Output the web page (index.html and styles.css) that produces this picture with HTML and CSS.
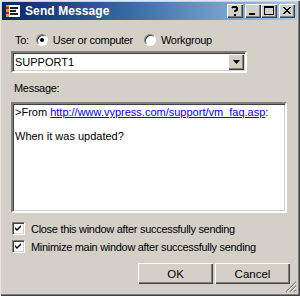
FILE: index.html
```html
<!DOCTYPE html>
<html>
<head>
<meta charset="utf-8">
<link rel="stylesheet" href="styles.css">
</head>
<body>
<div class="window">
  <div class="titlebar">
    <svg class="app-icon" width="14" height="12" viewBox="0 0 14 12">
      <rect x="0" y="0" width="14" height="12" fill="#ffffff"/>
      <rect x="0" y="0" width="3" height="12" fill="#d8a020"/>
      <rect x="0" y="2" width="3" height="2" fill="#c02020"/>
      <rect x="0" y="7" width="3" height="2" fill="#c02020"/>
      <rect x="4" y="2" width="8" height="2" fill="#202020"/>
      <rect x="4" y="5" width="6" height="2" fill="#202020"/>
      <rect x="4" y="8" width="8" height="2" fill="#202020"/>
    </svg>
    <span class="title">Send Message</span>
    <div class="caption-buttons">
      <div class="cbtn help">
        <svg width="16" height="14" viewBox="0 0 16 14"><path d="M5 4 L6 3 L9 3 L10 4 L10 6 L8 7 L8 8" fill="none" stroke="#000" stroke-width="2"/><rect x="7" y="10" width="2" height="2" fill="#000"/></svg>
      </div>
      <div class="cbtn-group">
        <div class="cbtn">
          <svg width="16" height="14" viewBox="0 0 16 14"><rect x="4" y="9" width="6" height="2" fill="#000"/></svg>
        </div>
        <div class="cbtn">
          <svg width="16" height="14" viewBox="0 0 16 14"><rect x="3.5" y="2.5" width="9" height="8" fill="none" stroke="#000" stroke-width="1"/><rect x="3" y="2" width="10" height="2" fill="#000"/></svg>
        </div>
      </div>
      <div class="cbtn close">
        <svg width="16" height="14" viewBox="0 0 16 14"><path d="M4 3 L11 10 M5 3 L12 10 M11 3 L4 10 M12 3 L5 10" stroke="#000" stroke-width="1"/></svg>
      </div>
    </div>
  </div>

  <div class="content">
    <div class="to-row">
      <span class="to-label">To:</span>
      <span class="radio checked"></span>
      <span class="radio-text">User or computer</span>
      <span class="radio"></span>
      <span class="radio-text">Workgroup</span>
    </div>

    <div class="combo">
      <span class="combo-text">SUPPORT1</span>
      <span class="combo-btn">
        <svg width="7" height="4" viewBox="0 0 7 4"><path d="M0 0 H7 L3.5 4 Z" fill="#000"/></svg>
      </span>
    </div>

    <div class="msg-label">Message:</div>

    <div class="memo">
      <div class="memo-line">&gt;From <span class="link">http://www.vypress.com/support/vm_faq.asp</span>:</div>
      <div class="memo-line">&nbsp;</div>
      <div class="memo-line">When it was updated?</div>
    </div>

    <div class="check-row first">
      <span class="checkbox">
        <svg width="9" height="9" viewBox="0 0 9 9"><path d="M1 3 L3 5 L7 1 L7 3 L3 7 L1 5 Z" fill="#000"/></svg>
      </span>
      <span class="check-text">Close this window after successfully sending</span>
    </div>
    <div class="check-row second">
      <span class="checkbox">
        <svg width="9" height="9" viewBox="0 0 9 9"><path d="M1 3 L3 5 L7 1 L7 3 L3 7 L1 5 Z" fill="#000"/></svg>
      </span>
      <span class="check-text">Minimize main window after successfully sending</span>
    </div>

    <div class="button-row">
      <div class="btn">OK</div>
      <div class="btn">Cancel</div>
    </div>
  </div>

  <svg class="grip" width="12" height="12" viewBox="0 0 12 12">
    <path d="M11 1 L1 11 M11 5 L5 11 M11 9 L9 11" stroke="#808080" stroke-width="1.2"/>
    <path d="M11 2 L2 11 M11 6 L6 11 M11 10 L10 11" stroke="#ffffff" stroke-width="0.8"/>
  </svg>
</div>
</body>
</html>
```

FILE: styles.css
```css
* { box-sizing: border-box; }
html, body {
  margin: 0;
  padding: 0;
  width: 300px;
  height: 296px;
  overflow: hidden;
  background: #d4d0c8;
}
body {
  font-family: "Liberation Sans", Arial, sans-serif;
  font-size: 11px;
  letter-spacing: -0.3px;
  color: #000;
}
.window {
  position: relative;
  width: 300px;
  height: 296px;
  background: #d4d0c8;
  padding: 2px 3px 3px 2px;
  box-shadow: inset 1px 1px 0 #e8e6e0, inset -1px -1px 0 #404040, inset -2px -2px 0 #808080;
}
.titlebar {
  height: 18px;
  display: flex;
  align-items: center;
  background: linear-gradient(to right, #0a246a 0%, #3a6ea5 45%, #a6caf0 100%);
  padding-left: 3px;
  padding-right: 2px;
}
.app-icon {
  margin-left: 1px;
  margin-right: 5px;
  flex: none;
}
.title {
  color: #fff;
  font-weight: bold;
  font-size: 12px;
  letter-spacing: 0.1px;
  flex: 1;
}
.caption-buttons {
  display: flex;
  align-items: center;
  gap: 2px;
}
.cbtn-group { display: flex; }
.cbtn {
  width: 16px;
  height: 14px;
  background: #d4d0c8;
  box-shadow: inset 1px 1px 0 #ffffff, inset -1px -1px 0 #404040, inset -2px -2px 0 #808080;
}
.cbtn svg { display: block; }
.content {
  padding: 12px 0 0 9px;
}
.to-row {
  height: 16px;
  display: flex;
  align-items: center;
}
.to-label { margin-left: 4px; margin-right: 7px; }
.radio {
  width: 12px;
  height: 12px;
  border-radius: 50%;
  background: #fff;
  border: 1px solid;
  border-color: #808080 #ffffff #ffffff #808080;
  box-shadow: inset 1px 1px 0 #404040;
  position: relative;
  flex: none;
}
.radio.checked::after {
  content: "";
  position: absolute;
  left: 3px;
  top: 3px;
  width: 4px;
  height: 4px;
  border-radius: 50%;
  background: #000;
}
.radio-text { margin-left: 5px; margin-right: 11px; }
.combo {
  margin-top: 3px;
  width: 236px;
  height: 22px;
  background: #fff;
  border: 2px solid;
  border-color: #808080 #ffffff #ffffff #808080;
  box-shadow: inset 1px 1px 0 #404040, inset -1px -1px 0 #d4d0c8;
  display: flex;
  align-items: center;
  justify-content: space-between;
  padding: 0 1px 0 2px;
}
.combo-text { font-size: 11px; letter-spacing: 0; }
.combo-btn {
  width: 16px;
  height: 16px;
  background: #d4d0c8;
  box-shadow: inset 1px 1px 0 #ffffff, inset -1px -1px 0 #404040, inset -2px -2px 0 #808080;
  display: flex;
  align-items: center;
  justify-content: center;
}
.msg-label {
  margin-top: 9px;
  margin-left: 3px;
  line-height: 13px;
}
.memo {
  margin-top: 7px;
  width: 276px;
  height: 111px;
  background: #fff;
  border: 2px solid;
  border-color: #808080 #ffffff #ffffff #808080;
  box-shadow: inset 1px 1px 0 #404040, inset -1px -1px 0 #d4d0c8;
  padding: 2px 2px 0 2px;
  font-size: 11px;
  letter-spacing: 0;
}
.memo-line { line-height: 12px; white-space: nowrap; }
.link { color: #0000ff; text-decoration: underline; }
.check-row {
  display: flex;
  align-items: center;
  height: 13px;
}
.check-row.first { margin-top: 9px; }
.check-row.second { margin-top: 5px; }
.checkbox {
  width: 13px;
  height: 13px;
  margin-left: 1px;
  background: #fff;
  border: 1px solid;
  border-color: #808080 #ffffff #ffffff #808080;
  box-shadow: inset 1px 1px 0 #404040, inset -1px -1px 0 #d4d0c8;
  display: flex;
  align-items: center;
  justify-content: center;
  flex: none;
}
.checkbox svg { display: block; }
.check-text { margin-left: 6px; }
.button-row {
  margin-top: 10px;
  display: flex;
  justify-content: flex-end;
  gap: 2px;
  width: 279px;
}
.btn {
  width: 75px;
  height: 21px;
  display: flex;
  align-items: center;
  justify-content: center;
  background: #d4d0c8;
  box-shadow: inset 1px 1px 0 #ffffff, inset -1px -1px 0 #404040, inset -2px -2px 0 #808080;
  font-size: 11.5px;
  letter-spacing: 0;
}
.grip {
  position: absolute;
  right: 3px;
  bottom: 3px;
}
```
